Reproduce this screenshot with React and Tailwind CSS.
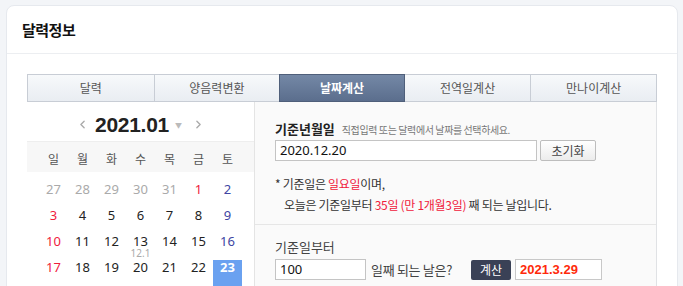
import { ChevronLeft, ChevronRight } from "lucide-react";

const TABS = ["달력", "양음력변환", "날짜계산", "전역일계산", "만나이계산"];
const WEEK = ["일", "월", "화", "수", "목", "금", "토"];

// d: label, c: colour class
const DAYS = [
	[
		{ d: "27", c: "text-[#aaaaaa]" },
		{ d: "28", c: "text-[#aaaaaa]" },
		{ d: "29", c: "text-[#aaaaaa]" },
		{ d: "30", c: "text-[#aaaaaa]" },
		{ d: "31", c: "text-[#aaaaaa]" },
		{ d: "1", c: "text-[#f0203c]" },
		{ d: "2", c: "text-[#4045a3]" },
	],
	[
		{ d: "3", c: "text-[#f0203c]" },
		{ d: "4" },
		{ d: "5" },
		{ d: "6" },
		{ d: "7" },
		{ d: "8" },
		{ d: "9", c: "text-[#4045a3]" },
	],
	[
		{ d: "10", c: "text-[#f0203c]" },
		{ d: "11" },
		{ d: "12" },
		{ d: "13", lunar: "12.1" },
		{ d: "14" },
		{ d: "15" },
		{ d: "16", c: "text-[#4045a3]" },
	],
	[
		{ d: "17", c: "text-[#f0203c]" },
		{ d: "18" },
		{ d: "19" },
		{ d: "20" },
		{ d: "21" },
		{ d: "22" },
		{ d: "23", sel: true },
	],
];

const kr = "font-['Noto_Sans_CJK_KR','Noto_Sans',sans-serif]";

export default function App() {
	return (
		<div className={`w-[683px] h-[286px] overflow-hidden bg-[#f3f5f8] pt-[5px] pl-[6px] ${kr}`}>
			<div className="w-[672px] h-[300px] bg-white border border-[#e6e9ee] rounded-t-[8px]">
				<div className="h-[48px] border-b border-[#eceef1] px-[15px] flex items-center">
					<h1 className="text-[15px] font-bold text-[#111] tracking-[-0.5px] pt-[1px]">달력정보</h1>
				</div>

				<div className="px-[20px] pt-[20px]">
					{/* tabs */}
					<div className="grid grid-cols-5 h-[28px] border border-[#c8cdd5]">
						{TABS.map((t, i) =>
							i === 2 ? (
								<div
									key={t}
									className="flex items-center justify-center -my-px h-[28px] bg-gradient-to-b from-[#7488a6] to-[#5b6e8d] border border-[#4f5f7a] text-white text-[12px] font-bold">
									{t}
								</div>
							) : (
								<div
									key={t}
									className={`flex items-center justify-center bg-gradient-to-b from-[#f7f9fb] to-[#e9edf2] text-[#555] text-[12px] ${i !== 0 && i !== 3 ? "border-l border-[#c8cdd5]" : ""}`}>
									{t}
								</div>
							)
						)}
					</div>

					<div className="flex h-[200px] border-r border-[#e0e2e5]">
						{/* calendar */}
						<div className="w-[227px] px-[12px] shrink-0">
							<div className="h-[39px] flex items-center justify-center pt-[6px] text-[#aaa]">
								<ChevronLeft size={13} strokeWidth={2.5} className="mr-[6px]" />
								<span className="font-['Liberation_Sans',sans-serif] font-bold text-[21px] text-[#222] tracking-[-0.3px] leading-none">
									2021.01
								</span>
								<span className="text-[7px] ml-[6px] mt-[2px] text-[#bbbbbb]">▼</span>
								<ChevronRight size={13} strokeWidth={2.5} className="ml-[10px]" />
							</div>
							<div className="-mx-[12px] h-[31px] bg-[#f7f7f7] border-t border-[#eeeeee] px-[12px] grid grid-cols-7 items-center">
								{WEEK.map((w) => (
									<div key={w} className="text-center text-[12px] text-[#555] pt-[3px]">
										{w}
									</div>
								))}
							</div>
							<div className="pt-[10px] font-['Noto_Sans',sans-serif]">
								{DAYS.map((row, r) => (
									<div key={r} className="grid grid-cols-7">
										{row.map((c) => (
											<div
												key={c.d}
												className={`relative h-[26px] text-center text-[13px] leading-[14px] ${c.sel ? "bg-[#6aa1f0] text-white font-bold" : `${c.c || "text-[#222]"}`}`}>
												{c.d}
												{c.lunar && (
													<span className="absolute left-0 right-0 top-[12px] text-[10px] text-[#aaa]">
														{c.lunar}
													</span>
												)}
											</div>
										))}
									</div>
								))}
							</div>
						</div>

						{/* date calc */}
						<div className="flex-1 bg-[#fafafa] border-l border-[#e4e4e4]">
							<div className="px-[20px] pt-[17px] h-[123px] border-b border-[#e6e6e6]">
								<div className="flex items-baseline h-[18px]">
									<span className="text-[13px] font-bold text-[#222]">기준년월일</span>
									<span className="ml-[7px] text-[10px] text-[#777] tracking-[-0.4px]">
										직접입력 또는 달력에서 날짜를 선택하세요.
									</span>
								</div>
								<div className="flex mt-[3px]">
									<div className="w-[262px] h-[21px] border border-[#c4c4c4] bg-white px-[4px] flex items-center text-[13px] text-[#111] font-['Noto_Sans',sans-serif]">
										2020.12.20
									</div>
									<div className="ml-[3px] w-[56px] h-[21px] border border-[#bdbdbd] rounded-[2px] bg-gradient-to-b from-white to-[#ececec] flex items-center justify-center text-[12px] text-[#444]">
										초기화
									</div>
								</div>
								<div className="mt-[12px] text-[12px] text-[#333] leading-[21px] tracking-[-0.3px]">
									<div>
										* 기준일은 <span className="text-[#f0203c]">일요일</span>이며,
									</div>
									<div className="pl-[9px]">
										오늘은 기준일부터 <span className="text-[#f0203c]">35일 (만 1개월3일)</span> 째 되는 날입니다.
									</div>
								</div>
							</div>
							<div className="px-[20px] pt-[12px]">
								<div className="text-[13px] text-[#444] h-[18px]">기준일부터</div>
								<div className="flex items-center mt-[4px]">
									<div className="w-[91px] h-[21px] border border-[#c4c4c4] bg-white px-[4px] flex items-center text-[13px] text-[#111] font-['Noto_Sans',sans-serif]">
										100
									</div>
									<span className="ml-[5px] text-[13px] text-[#444] tracking-[-0.3px]">일째 되는 날은?</span>
									<div className="ml-[19px] w-[40px] h-[20px] rounded-[2px] bg-[#3a4156] text-white text-[12px] flex items-center justify-center">
										계산
									</div>
									<div className="ml-[4px] w-[87px] h-[21px] border border-[#c8c8c8] bg-white px-[4px] flex items-center font-['Liberation_Sans',sans-serif] font-bold text-[13px] text-[#ff2a0a]">
										2021.3.29
									</div>
								</div>
							</div>
						</div>
					</div>
				</div>
			</div>
		</div>
	);
}
